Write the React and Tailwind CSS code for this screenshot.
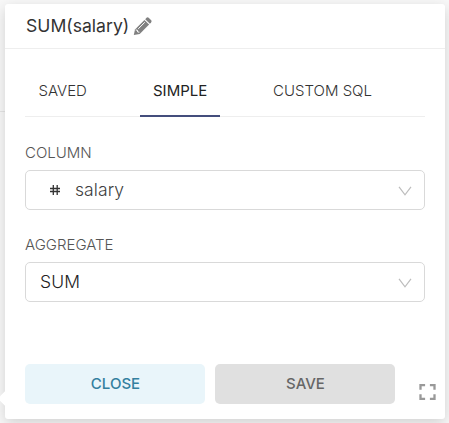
const tabs = [
  { label: 'SAVED', box: 'w-[75px]', text: 'w-[48px]', active: false },
  { label: 'SIMPLE', box: 'w-20', text: 'w-[54px]', active: true },
  { label: 'CUSTOM SQL', box: 'w-[125px]', text: 'w-[99px]', active: false },
];

function Chevron() {
  return (
    <svg className="mt-px mr-3 h-[10px] w-[14px]" viewBox="0 0 14 10" fill="none" stroke="#bdbdbd" strokeWidth="1.2">
      <path d="M1 .8 7 8.8 13 .8" />
    </svg>
  );
}

function Field({ label, children }) {
  return (
    <div className="flex flex-col">
      <label className="h-[26px] text-[15px] leading-[17px] font-light text-[#555]">{label}</label>
      <div className="flex h-10 w-[400px] items-center justify-between rounded-[5px] border border-[#d9d9d9] bg-white text-[17.5px] font-light">
        {children}
        <Chevron />
      </div>
    </div>
  );
}

export default function App() {
  return (
    <div className="relative h-[423px] w-[449px] overflow-hidden bg-[#f8f8f8] pt-1 pl-[5px] font-['Inter','Liberation_Sans',sans-serif]">
      <div className="absolute top-[111px] left-0 h-px w-[5px] bg-[#e5e5e5]" />
      <div className="relative flex h-[415px] w-[440px] flex-col rounded-[3px] bg-white shadow-[0_4px_14px_rgba(0,0,0,0.16)]">
        <header className="flex h-[45px] shrink-0 items-center gap-1 border-b border-[#eeeeee] pl-[21px]">
          <span className="mt-px text-[17.6px] font-normal text-[#333]">SUM(salary)</span>
          <svg className="h-[19px] w-[19px]" viewBox="0 0 19 19">
            <path fill="#808080" d="m.8 18 1.2-5.6L11.4 3l4.7 4.6L6.7 17Z" />
            <path fill="#808080" d="m12.2 2.2 1.3-1.4q1.1-.9 2.2 0l2.5 2.5q.8 1-.1 2.1l-1.2 1.3Z" />
            <path fill="none" stroke="white" strokeWidth="1" d="m5.2 11.9 6.6-6.6M2.7 13l1.7.2.3 1.8 1.7.2" />
          </svg>
        </header>
        <main className="flex flex-col px-5 pt-[25px]">
          <nav className="flex h-[43px] gap-10 border-b border-[#eeeeee]">
            {tabs.map((tab) => (
              <div
                key={tab.label}
                className={`${tab.box} flex h-[43px] items-start justify-center border-b-2 pt-[7px] ${tab.active ? 'border-[#444e7c] font-normal text-[#222]' : 'border-transparent font-light text-[#333]'}`}
              >
                <span className={`${tab.text} text-[15px] leading-[20px] whitespace-nowrap`}>{tab.label}</span>
              </div>
            ))}
          </nav>
          <div className="mt-[27px] flex flex-col gap-[26px]">
            <Field label="COLUMN">
              <div className="flex items-center gap-[15px] pl-6">
                <svg className="mb-px h-[10px] w-[10px]" viewBox="0 0 10 10" fill="none" stroke="#333" strokeWidth="1.3">
                  <path d="M0 3.5h10M0 6.5h10M3.3 0v10M7.2 0v10" />
                </svg>
                <span className="tracking-[0.08px] text-[#404040]">salary</span>
              </div>
            </Field>
            <Field label="AGGREGATE">
              <span className="pl-[14px] tracking-[0.1px] text-[#222]">SUM</span>
            </Field>
          </div>
          <footer className="mt-[62px] flex gap-[10px] text-[15px] font-medium">
            <button className="h-10 w-[180px] rounded-[5px] bg-[#e9f5fa] pl-px text-[#33809f]">CLOSE</button>
            <button className="h-10 w-[180px] rounded-[5px] bg-[#e0e0e0] pl-px text-[#666]">SAVE</button>
          </footer>
        </main>
        <svg className="absolute top-[380px] left-[414px] h-4 w-[17px]" viewBox="0 0 17 16" fill="none" stroke="#999" strokeWidth="2.3">
          <path d="M1.5 5.7V1.2h4.6M10.9 1.2h4.6v4.5M15.5 10.3v4.5h-4.6M6.1 14.8H1.5v-4.5" />
        </svg>
        <div className="absolute top-[389px] left-[-5px] h-[11px] w-[11px] rotate-45 bg-white" />
      </div>
    </div>
  );
}
